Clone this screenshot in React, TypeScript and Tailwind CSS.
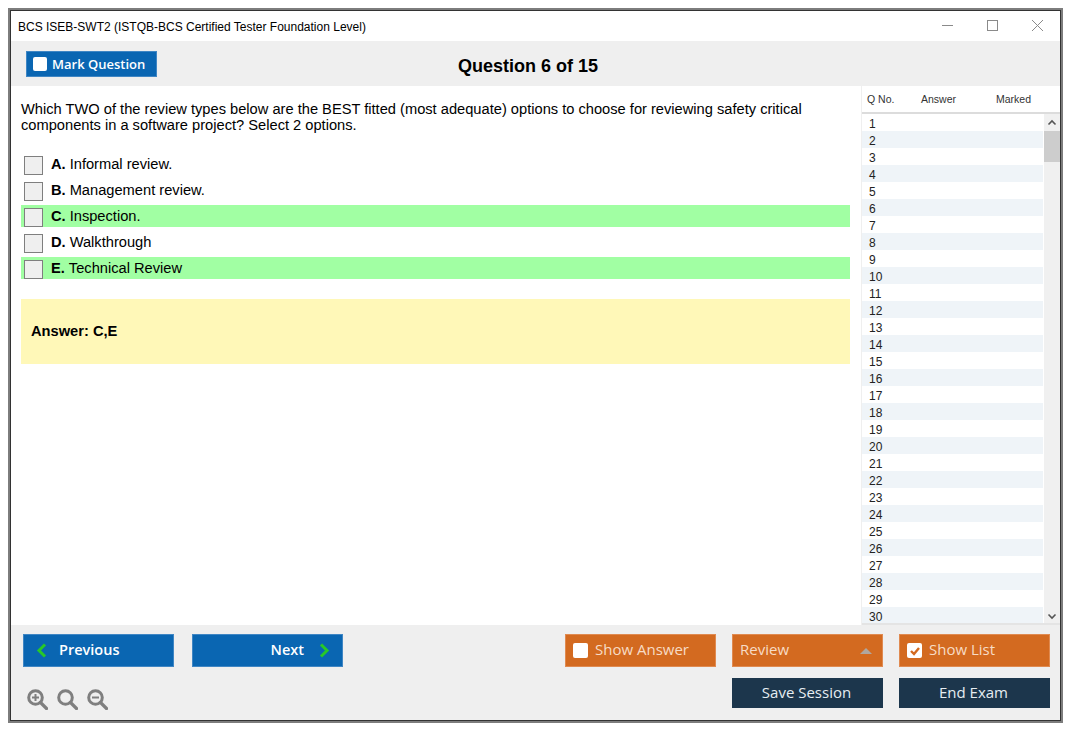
const options = [
  { letter: 'A.', text: 'Informal review.', correct: false },
  { letter: 'B.', text: 'Management review.', correct: false },
  { letter: 'C.', text: 'Inspection.', correct: true },
  { letter: 'D.', text: 'Walkthrough', correct: false },
  { letter: 'E.', text: 'Technical Review', correct: true },
];

const rows = Array.from({ length: 30 }, (_, i) => i + 1);

function ZoomIcon({ kind }: { kind: 'in' | 'reset' | 'out' }) {
  return (
    <svg width="21" height="21" viewBox="0 0 21 21" fill="none" stroke="#7f7f7f" strokeWidth="3">
      <circle cx="8.5" cy="8.5" r="6.8" />
      <path d="M13.5 13.5l6 6" strokeWidth="3.2" strokeLinecap="round" />
      {kind !== 'reset' && <path d="M5 8.5h7" strokeWidth="2" />}
      {kind === 'in' && <path d="M8.5 5v7" strokeWidth="2" />}
    </svg>
  );
}

function OrangeButton({ label, checked }: { label: string; checked?: boolean }) {
  return (
    <div className="w-[151px] h-[33px] bg-[#d36a20] border border-[#e08a50] flex items-center pl-[7px] text-[#f7dcc6] text-[15px]">
      <span className="w-[15px] h-[15px] bg-white rounded-[2px] mr-[7px] flex items-center justify-center">
        {checked && (
          <svg width="12" height="12" viewBox="0 0 12 12" fill="none" stroke="#d36a20" strokeWidth="2.4">
            <path d="M2 6l3 3 5-6" />
          </svg>
        )}
      </span>
      <span className="pb-[2px]">{label}</span>
    </div>
  );
}

export default function App() {
  return (
    <div className="w-[1075px] h-[735px] bg-white pt-2 pl-2 font-['Liberation_Sans',sans-serif] overflow-hidden">
      <div className="w-[1055px] h-[715px] border-2 border-[#7d7d7d] flex flex-col">
        <div className="flex-1 min-h-0 border border-[#333333] flex flex-col">
          {/* title bar */}
          <div className="h-[30px] shrink-0 bg-white flex items-center justify-between pl-[7px] pr-[17px]">
            <span className="text-[12px] text-black pt-[2px]">BCS ISEB-SWT2 (ISTQB-BCS Certified Tester Foundation Level)</span>
            <div className="flex items-center gap-[34px] pb-[2px]">
              <svg width="11" height="11" viewBox="0 0 11 11" stroke="#8a8a8a" strokeWidth="1"><path d="M0 5.5h11" /></svg>
              <svg width="11" height="11" viewBox="0 0 11 11" fill="none" stroke="#8a8a8a" strokeWidth="1"><rect x="0.5" y="0.5" width="10" height="10" /></svg>
              <svg width="11" height="11" viewBox="0 0 11 11" stroke="#8a8a8a" strokeWidth="1"><path d="M0 0l11 11M11 0L0 11" /></svg>
            </div>
          </div>

          {/* toolbar */}
          <div className="h-[45px] shrink-0 bg-[#efefef] flex items-center relative pl-[15px] pt-[1px]">
            <div className="w-[131px] h-[26px] bg-[#0a66b2] border border-[#3f86c4] flex items-center pl-[6px] text-white text-[13px] font-['Open_Sans',sans-serif] font-semibold">
              <span className="w-[14px] h-[14px] bg-white rounded-[2px] mr-[5px]" />
              <span className="pt-[1px]">Mark Question</span>
            </div>
            <span className="absolute left-[447px] top-[14px] text-[18px] leading-[22px] font-bold text-black">Question 6 of 15</span>
          </div>

          <div className="flex-1 min-h-0 flex">
            {/* question */}
            <div className="w-[850px] shrink-0 bg-white pl-[10px] pr-[11px] pt-[15px]">
              <p className="text-[14.67px] leading-[16px] text-black">
                Which TWO of the review types below are the BEST fitted (most adequate) options to choose for reviewing safety critical components in a software project? Select 2 options.
              </p>
              <div className="mt-[20px] flex flex-col gap-[4px]">
                {options.map((o) => (
                  <div key={o.letter} className={`h-[22px] flex items-center pl-[3px] ${o.correct ? 'bg-[#a1ffa3]' : ''}`}>
                    <span className="w-[19px] h-[19px] mt-[3px] bg-[#efefef] border border-[#7f7f7f] mr-[8px]" />
                    <span className="text-[14.67px] text-black">
                      <b className="mr-[4px]">{o.letter}</b>{o.text}
                    </span>
                  </div>
                ))}
              </div>
              <div className="mt-[20px] h-[65px] bg-[#fff8b8] flex items-center pl-[10px] pb-[2px] text-[14.67px] font-bold text-black">
                Answer: C,E
              </div>
            </div>

            {/* list */}
            <div className="flex-1 min-w-0 bg-[#efefef] pl-[1px] flex flex-col">
              <div className="h-[26px] shrink-0 bg-white flex items-center text-[10.5px] text-[#333333] pl-[5px] pt-[2px]">
                <span className="w-[54px]">Q No.</span>
                <span className="w-[75px]">Answer</span>
                <span>Marked</span>
              </div>
              <div className="h-[2px] shrink-0 bg-[#dcdcdc]" />
              <div className="flex-1 min-h-0 flex bg-white relative">
                <div className="w-[181px] mr-[1px] overflow-hidden">
                  {rows.map((n) => (
                    <div key={n} className={`h-[17.03px] flex items-center pl-[7px] pt-[2px] text-[12px] text-[#222222] ${n % 2 === 0 ? 'bg-[#eff4f8]' : 'bg-white'}`}>
                      {n}
                    </div>
                  ))}
                </div>
                <div className="w-[16px] bg-[#f0f0f0] flex flex-col items-center justify-between">
                  <div className="w-full">
                    <svg width="16" height="17" viewBox="0 0 16 17" fill="none" stroke="#555555" strokeWidth="1.6"><path d="M4.5 10.5L8 7l3.5 3.5" /></svg>
                    <div className="w-full h-[31px] bg-[#cdcdcd]" />
                  </div>
                  <svg width="16" height="17" viewBox="0 0 16 17" fill="none" stroke="#555555" strokeWidth="1.6"><path d="M4.5 6.5L8 10l3.5-3.5" /></svg>
                </div>
                <div className="absolute left-0 right-0 bottom-0 h-[2px] bg-[#e4e4e4]" />
              </div>
            </div>
          </div>

          {/* bottom bar */}
          <div className="h-[95px] shrink-0 bg-[#efefef] flex justify-between pl-[12px] pr-[10px] pt-[9px]">
            <div className="flex flex-col">
              <div className="flex gap-[18px]">
                <div className="w-[151px] h-[33px] bg-[#0a66b2] border border-[#3f86c4] flex items-center pl-[12px] text-white text-[14.5px] font-['Open_Sans',sans-serif] font-semibold">
                  <svg width="11" height="15" viewBox="0 0 11 15" fill="none" stroke="#28c828" strokeWidth="3" className="mr-[12px]"><path d="M9 1.5L3 7.5l6 6" /></svg>
                  <span className="pb-[2px]">Previous</span>
                </div>
                <div className="w-[151px] h-[33px] bg-[#0a66b2] border border-[#3f86c4] flex items-center justify-end pr-[12px] text-white text-[14.5px] font-['Open_Sans',sans-serif] font-semibold">
                  <span className="pb-[2px]">Next</span>
                  <svg width="11" height="15" viewBox="0 0 11 15" fill="none" stroke="#28c828" strokeWidth="3" className="ml-[15px]"><path d="M2 1.5l6 6-6 6" /></svg>
                </div>
              </div>
              <div className="flex gap-[9px] mt-[22px] ml-[4px]">
                <ZoomIcon kind="in" />
                <ZoomIcon kind="reset" />
                <ZoomIcon kind="out" />
              </div>
            </div>
            <div className="flex flex-col items-end gap-[11px] font-['Open_Sans',sans-serif]">
              <div className="flex gap-[16px]">
                <OrangeButton label="Show Answer" />
                <div className="w-[151px] h-[33px] bg-[#d36a20] border border-[#e08a50] flex items-center justify-between pl-[7px] pr-[10px] text-[#f7dcc6] text-[15px]">
                  <span className="pb-[2px]">Review</span>
                  <span className="w-0 h-0 border-l-[6px] border-r-[6px] border-b-[6px] border-l-transparent border-r-transparent border-b-[#b0a79f]" />
                </div>
                <OrangeButton label="Show List" checked />
              </div>
              <div className="flex gap-[16px]">
                <div className="w-[151px] h-[30px] bg-[#1c364c] flex items-center justify-center pr-[2px] pb-[1px] text-[#e6edf2] text-[15px]">Save Session</div>
                <div className="w-[151px] h-[30px] bg-[#1c364c] flex items-center justify-center pr-[2px] pb-[1px] text-[#e6edf2] text-[15px]">End Exam</div>
              </div>
            </div>
          </div>
        </div>
      </div>
    </div>
  );
}
